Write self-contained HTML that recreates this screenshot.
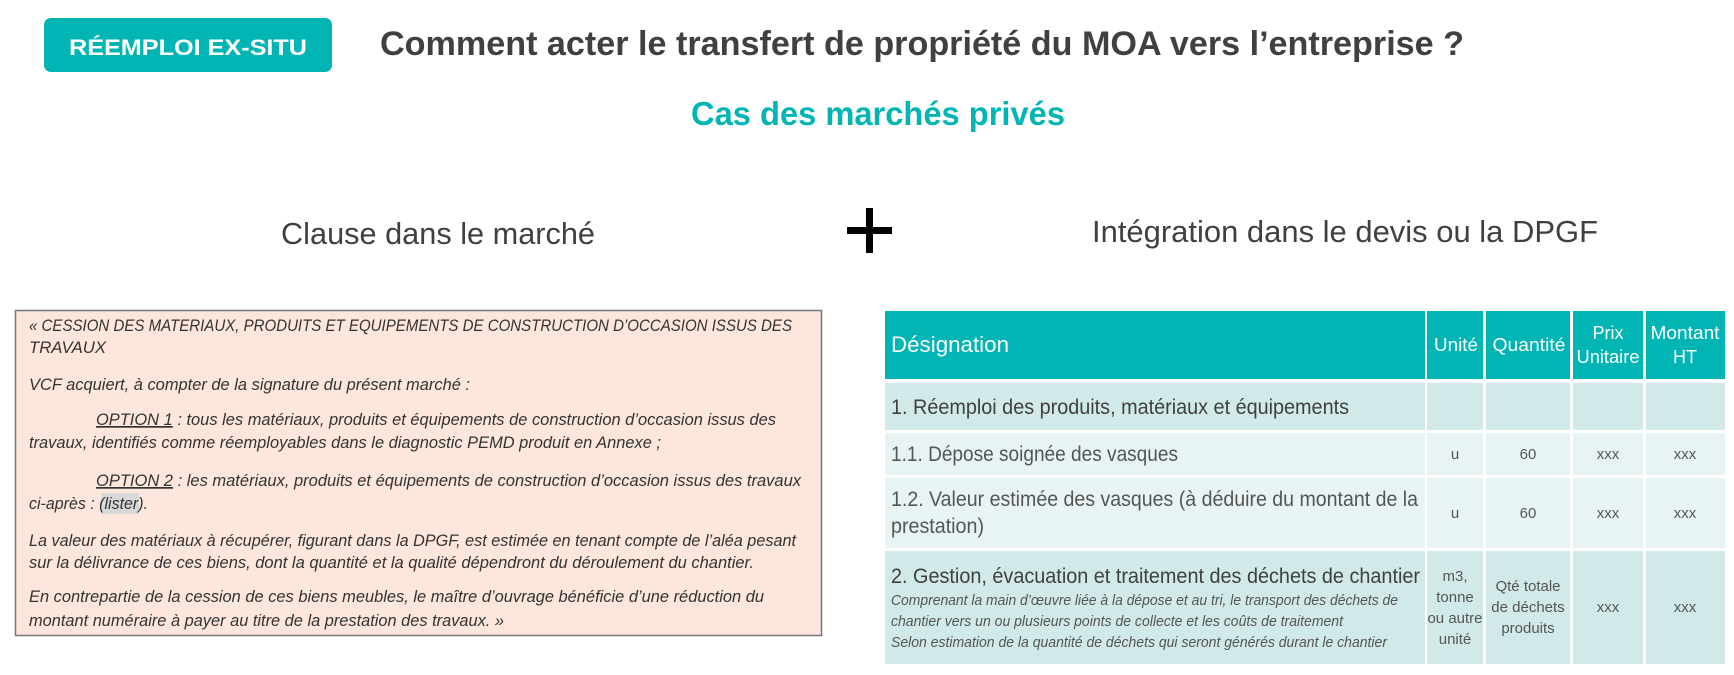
<!DOCTYPE html>
<html><head><meta charset="utf-8"><style>html,body{margin:0;padding:0;background:#fff;}svg{display:block}</style></head>
<body>
<svg width="1734" height="675" viewBox="0 0 1734 675" xmlns="http://www.w3.org/2000/svg" font-family="Liberation Sans, sans-serif">
<rect width="1734" height="675" fill="#fff"/>
<!-- badge -->
<rect x="44" y="18" width="288" height="54" rx="7" fill="#00b5b3"/>
<text x="69" y="55" font-size="22" font-weight="bold" fill="#fff" textLength="238" lengthAdjust="spacingAndGlyphs">RÉEMPLOI EX-SITU</text>
<text x="380" y="55" font-size="34" font-weight="bold" fill="#404040" textLength="1084" lengthAdjust="spacingAndGlyphs">Comment acter le transfert de propriété du MOA vers l’entreprise ?</text>
<text x="691" y="125" font-size="33" font-weight="bold" fill="#00b5b3" textLength="374" lengthAdjust="spacingAndGlyphs">Cas des marchés privés</text>
<text x="281" y="244" font-size="31" fill="#404040" textLength="314" lengthAdjust="spacingAndGlyphs">Clause dans le marché</text>
<text x="1092" y="242" font-size="31" fill="#404040" textLength="506" lengthAdjust="spacingAndGlyphs">Intégration dans le devis ou la DPGF</text>
<rect x="847" y="227" width="45" height="7" fill="#000"/>
<rect x="866" y="208" width="7" height="45" fill="#000"/>
<!-- left box -->
<rect x="15.5" y="310.5" width="806" height="325" fill="#fde6dc" stroke="#777" stroke-width="1.5"/>
<g font-size="17" font-style="italic" fill="#333" lengthAdjust="spacingAndGlyphs">
<text x="29" y="331" textLength="763" lengthAdjust="spacingAndGlyphs">« CESSION DES MATERIAUX, PRODUITS ET EQUIPEMENTS DE CONSTRUCTION D’OCCASION ISSUS DES</text>
<text x="29" y="353" textLength="77" lengthAdjust="spacingAndGlyphs">TRAVAUX</text>
<text x="29" y="390" textLength="441" lengthAdjust="spacingAndGlyphs">VCF acquiert, à compter de la signature du présent marché :</text>
<text x="96" y="425" textLength="680" lengthAdjust="spacingAndGlyphs"><tspan text-decoration="underline">OPTION 1</tspan> : tous les matériaux, produits et équipements de construction d’occasion issus des</text>
<text x="29" y="448" textLength="632" lengthAdjust="spacingAndGlyphs">travaux, identifiés comme réemployables dans le diagnostic PEMD produit en Annexe ;</text>
<text x="96" y="486" textLength="705" lengthAdjust="spacingAndGlyphs"><tspan text-decoration="underline">OPTION 2</tspan> : les matériaux, produits et équipements de construction d’occasion issus des travaux</text>
<rect x="101" y="493" width="38" height="21" fill="#d9d9d9"/>
<text x="29" y="509" textLength="119" lengthAdjust="spacingAndGlyphs">ci-après : (lister).</text>
<text x="29" y="546" textLength="767" lengthAdjust="spacingAndGlyphs">La valeur des matériaux à récupérer, figurant dans la DPGF, est estimée en tenant compte de l’aléa pesant</text>
<text x="29" y="568" textLength="725" lengthAdjust="spacingAndGlyphs">sur la délivrance de ces biens, dont la quantité et la qualité dépendront du déroulement du chantier.</text>
<text x="29" y="602" textLength="735" lengthAdjust="spacingAndGlyphs">En contrepartie de la cession de ces biens meubles, le maître d’ouvrage bénéficie d’une réduction du</text>
<text x="29" y="626" textLength="475" lengthAdjust="spacingAndGlyphs">montant numéraire à payer au titre de la prestation des travaux. »</text>
</g>
<!-- table -->
<g>
<rect x="885" y="311" width="540" height="68" fill="#00b5b3"/>
<rect x="1427" y="311" width="56" height="68" fill="#00b5b3"/>
<rect x="1486" y="311" width="84" height="68" fill="#00b5b3"/>
<rect x="1573" y="311" width="70" height="68" fill="#00b5b3"/>
<rect x="1646" y="311" width="79" height="68" fill="#00b5b3"/>
<rect x="885" y="383" width="540" height="47" fill="#d2e9e9"/>
<rect x="1427" y="383" width="56" height="47" fill="#d2e9e9"/>
<rect x="1486" y="383" width="84" height="47" fill="#d2e9e9"/>
<rect x="1573" y="383" width="70" height="47" fill="#d2e9e9"/>
<rect x="1646" y="383" width="79" height="47" fill="#d2e9e9"/>
<rect x="885" y="433" width="540" height="42" fill="#e8f4f4"/>
<rect x="1427" y="433" width="56" height="42" fill="#e8f4f4"/>
<rect x="1486" y="433" width="84" height="42" fill="#e8f4f4"/>
<rect x="1573" y="433" width="70" height="42" fill="#e8f4f4"/>
<rect x="1646" y="433" width="79" height="42" fill="#e8f4f4"/>
<rect x="885" y="478" width="540" height="70" fill="#e8f4f4"/>
<rect x="1427" y="478" width="56" height="70" fill="#e8f4f4"/>
<rect x="1486" y="478" width="84" height="70" fill="#e8f4f4"/>
<rect x="1573" y="478" width="70" height="70" fill="#e8f4f4"/>
<rect x="1646" y="478" width="79" height="70" fill="#e8f4f4"/>
<rect x="885" y="551" width="540" height="113" fill="#d2e9e9"/>
<rect x="1427" y="551" width="56" height="113" fill="#d2e9e9"/>
<rect x="1486" y="551" width="84" height="113" fill="#d2e9e9"/>
<rect x="1573" y="551" width="70" height="113" fill="#d2e9e9"/>
<rect x="1646" y="551" width="79" height="113" fill="#d2e9e9"/>
</g>
<g fill="#fff" font-size="18" text-anchor="middle">
<text x="891" y="352" font-size="22" text-anchor="start" textLength="118" lengthAdjust="spacingAndGlyphs">Désignation</text>
<text x="1456" y="351" textLength="44" lengthAdjust="spacingAndGlyphs">Unité</text>
<text x="1529" y="351" textLength="73" lengthAdjust="spacingAndGlyphs">Quantité</text>
<text x="1608" y="339">Prix</text>
<text x="1608" y="363" textLength="63" lengthAdjust="spacingAndGlyphs">Unitaire</text>
<text x="1685" y="339" textLength="69" lengthAdjust="spacingAndGlyphs">Montant</text>
<text x="1685" y="363">HT</text>
</g>
<g fill="#404040" font-size="21">
<text x="891" y="414" textLength="458" lengthAdjust="spacingAndGlyphs">1. Réemploi des produits, matériaux et équipements</text>
<text x="891" y="461" fill="#555" textLength="287" lengthAdjust="spacingAndGlyphs">1.1. Dépose soignée des vasques</text>
<text x="891" y="506" fill="#555" textLength="527" lengthAdjust="spacingAndGlyphs">1.2. Valeur estimée des vasques (à déduire du montant de la</text>
<text x="891" y="533" fill="#555" textLength="93" lengthAdjust="spacingAndGlyphs">prestation)</text>
<text x="891" y="583" textLength="529" lengthAdjust="spacingAndGlyphs">2. Gestion, évacuation et traitement des déchets de chantier</text>
</g>
<g fill="#555" font-size="14.5" font-style="italic">
<text x="891" y="605" textLength="507" lengthAdjust="spacingAndGlyphs">Comprenant la main d’œuvre liée à la dépose et au tri, le transport des déchets de</text>
<text x="891" y="626" textLength="452" lengthAdjust="spacingAndGlyphs">chantier vers un ou plusieurs points de collecte et les coûts de traitement</text>
<text x="891" y="647" textLength="496" lengthAdjust="spacingAndGlyphs">Selon estimation de la quantité de déchets qui seront générés durant le chantier</text>
</g>
<g fill="#555" font-size="15" text-anchor="middle">
<text x="1455" y="459">u</text><text x="1528" y="459">60</text><text x="1608" y="459">xxx</text><text x="1685" y="459">xxx</text>
<text x="1455" y="518">u</text><text x="1528" y="518">60</text><text x="1608" y="518">xxx</text><text x="1685" y="518">xxx</text>
<text x="1455" y="581">m3,</text><text x="1455" y="602">tonne</text><text x="1455" y="623">ou autre</text><text x="1455" y="644">unité</text>
<text x="1528" y="591">Qté totale</text><text x="1528" y="612">de déchets</text><text x="1528" y="633">produits</text>
<text x="1608" y="612">xxx</text><text x="1685" y="612">xxx</text>
</g>
</svg>
</body></html>
